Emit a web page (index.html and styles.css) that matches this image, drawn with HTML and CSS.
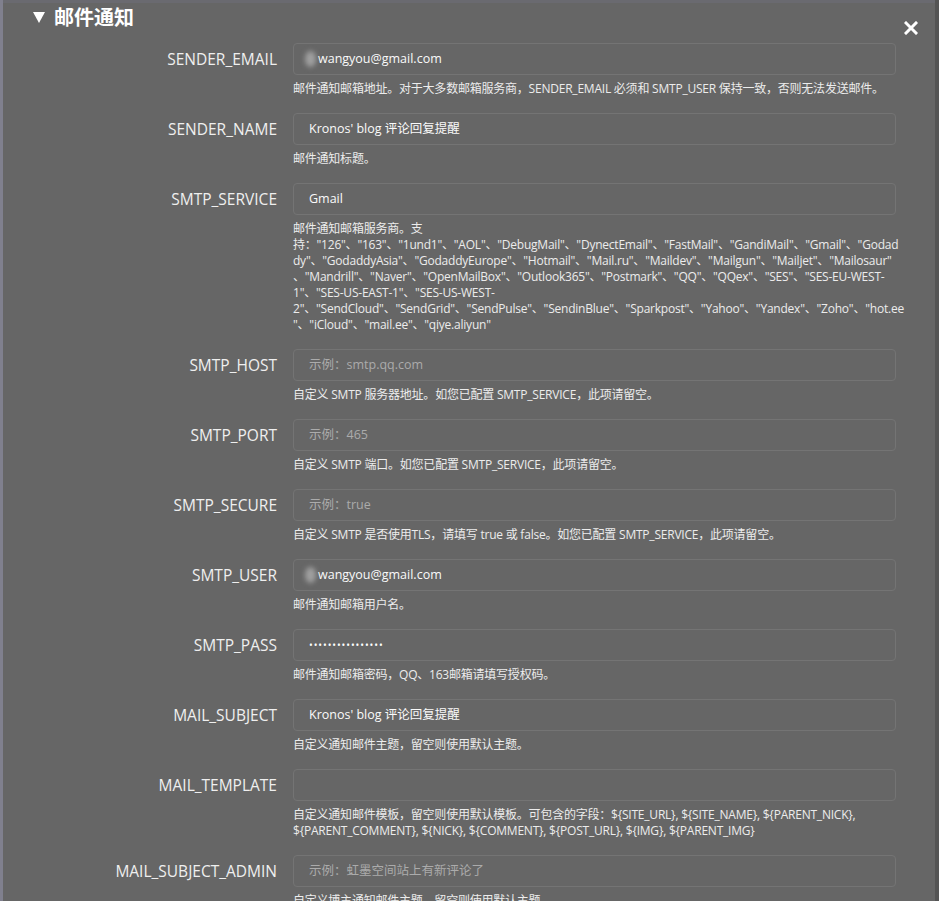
FILE: index.html
```html
<!DOCTYPE html>
<html lang="zh-CN">
<head>
<meta charset="utf-8">
<title>邮件通知</title>
<link rel="stylesheet" href="styles.css">
</head>
<body>
<div class="modal">
  <div class="head">
    <span class="tri"></span>
    <h2 class="title">邮件通知</h2>
    <button class="close" aria-label="关闭">
      <svg width="14" height="14" viewBox="0 0 14 14"><path d="M2 2 L12 12 M12 2 L2 12" stroke="#fff" stroke-width="3" stroke-linecap="square"/></svg>
    </button>
  </div>
  <div class="form">
    <div class="row">
      <label class="label">SENDER_EMAIL</label>
      <div class="field">
        <div class="input"><span class="blur"></span>wangyou@gmail.com</div>
        <p class="desc">邮件通知邮箱地址。对于大多数邮箱服务商，SENDER_EMAIL 必须和 SMTP_USER 保持一致，否则无法发送邮件。</p>
      </div>
    </div>
    <div class="row">
      <label class="label">SENDER_NAME</label>
      <div class="field">
        <div class="input">Kronos' blog 评论回复提醒</div>
        <p class="desc">邮件通知标题。</p>
      </div>
    </div>
    <div class="row">
      <label class="label">SMTP_SERVICE</label>
      <div class="field">
        <div class="input">Gmail</div>
        <p class="desc nowrap">邮件通知邮箱服务商。支<br>持："126"、"163"、"1und1"、"AOL"、"DebugMail"、"DynectEmail"、"FastMail"、"GandiMail"、"Gmail"、"Godad<br>dy"、"GodaddyAsia"、"GodaddyEurope"、"Hotmail"、"Mail.ru"、"Maildev"、"Mailgun"、"Mailjet"、"Mailosaur"<br>、"Mandrill"、"Naver"、"OpenMailBox"、"Outlook365"、"Postmark"、"QQ"、"QQex"、"SES"、"SES-EU-WEST-<br>1"、"SES-US-EAST-1"、"SES-US-WEST-<br>2"、"SendCloud"、"SendGrid"、"SendPulse"、"SendinBlue"、"Sparkpost"、"Yahoo"、"Yandex"、"Zoho"、"hot.ee<br>"、"iCloud"、"mail.ee"、"qiye.aliyun"</p>
      </div>
    </div>
    <div class="row">
      <label class="label">SMTP_HOST</label>
      <div class="field">
        <div class="input placeholder">示例：smtp.qq.com</div>
        <p class="desc">自定义 SMTP 服务器地址。如您已配置 SMTP_SERVICE，此项请留空。</p>
      </div>
    </div>
    <div class="row">
      <label class="label">SMTP_PORT</label>
      <div class="field">
        <div class="input placeholder">示例：465</div>
        <p class="desc">自定义 SMTP 端口。如您已配置 SMTP_SERVICE，此项请留空。</p>
      </div>
    </div>
    <div class="row">
      <label class="label">SMTP_SECURE</label>
      <div class="field">
        <div class="input placeholder">示例：true</div>
        <p class="desc">自定义 SMTP 是否使用TLS，请填写 true 或 false。如您已配置 SMTP_SERVICE，此项请留空。</p>
      </div>
    </div>
    <div class="row">
      <label class="label">SMTP_USER</label>
      <div class="field">
        <div class="input"><span class="blur"></span>wangyou@gmail.com</div>
        <p class="desc">邮件通知邮箱用户名。</p>
      </div>
    </div>
    <div class="row">
      <label class="label">SMTP_PASS</label>
      <div class="field">
        <div class="input"><span class="dots">••••••••••••••••</span></div>
        <p class="desc">邮件通知邮箱密码，QQ、163邮箱请填写授权码。</p>
      </div>
    </div>
    <div class="row">
      <label class="label">MAIL_SUBJECT</label>
      <div class="field">
        <div class="input">Kronos' blog 评论回复提醒</div>
        <p class="desc">自定义通知邮件主题，留空则使用默认主题。</p>
      </div>
    </div>
    <div class="row">
      <label class="label">MAIL_TEMPLATE</label>
      <div class="field">
        <div class="input"></div>
        <p class="desc">自定义通知邮件模板，留空则使用默认模板。可包含的字段：${SITE_URL}, ${SITE_NAME}, ${PARENT_NICK},<br>${PARENT_COMMENT}, ${NICK}, ${COMMENT}, ${POST_URL}, ${IMG}, ${PARENT_IMG}</p>
      </div>
    </div>
    <div class="row">
      <label class="label">MAIL_SUBJECT_ADMIN</label>
      <div class="field">
        <div class="input placeholder">示例：虹墨空间站上有新评论了</div>
        <p class="desc">自定义博主通知邮件主题，留空则使用默认主题。</p>
      </div>
    </div>
  </div>
</div>
</body>
</html>
```

FILE: styles.css
```css
html, body {
  margin: 0;
  padding: 0;
  height: 100%;
  overflow: hidden;
}
body {
  background: linear-gradient(to right, #80808e 0, #80808e 3px, #6a6a70 3px, #6a6a70 935px, #545454 935px);
  font-family: "Noto Sans CJK SC", sans-serif;
  color: #f0f0f0;
}
.modal {
  margin: 3px 4px 0 3px;
  width: 932px;
  height: 898px;
  background: #666666;
  box-sizing: border-box;
  padding: 0 39px 0 0;
  overflow: hidden;
}
.head {
  display: flex;
  align-items: center;
  height: 28px;
  padding-left: 30px;
  position: relative;
}
.tri {
  width: 0;
  height: 0;
  border-left: 6.5px solid transparent;
  border-right: 6.5px solid transparent;
  border-top: 11px solid #fff;
  margin-right: 9px;
  margin-top: 1px;
}
.title {
  margin: 0;
  font-size: 20px;
  font-weight: 700;
  color: #fff;
  line-height: 26px;
}
.close {
  position: absolute;
  right: -22px;
  top: 18px;
  background: none;
  border: 0;
  padding: 0;
  width: 14px;
  height: 14px;
  display: block;
}
.close svg { display: block; }
.form {
  padding-top: 12px;
}
.row {
  display: grid;
  grid-template-columns: 274px 603px;
  column-gap: 16px;
  margin-bottom: 16px;
}
.label {
  text-align: right;
  font-family: "Open Sans", "Noto Sans CJK SC", sans-serif;
  font-size: 15.5px;
  color: #efefef;
  line-height: 32px;
  height: 32px;
}
.field { min-width: 0; }
.input {
  box-sizing: border-box;
  height: 32px;
  border: 1px solid #747474;
  border-radius: 4px;
  padding: 0 15px;
  font-family: "Open Sans", "Noto Sans CJK SC", sans-serif;
  font-size: 12.5px;
  line-height: 30px;
  color: #fafafa;
  display: flex;
  align-items: center;
  white-space: nowrap;
}
.input.placeholder { color: #ababab; }
.blur {
  display: inline-block;
  width: 11px;
  height: 16px;
  border-radius: 50%;
  background: #a0a0a0;
  filter: blur(2.5px);
  margin-left: -4px;
  margin-right: 2px;
}
.dots {
  font-size: 10px;
  letter-spacing: 0.9px;
  color: #fff;
}
.desc {
  margin: 6px 0 0;
  font-size: 12px;
  line-height: 16px;
  color: #ececec;
  font-family: "Open Sans", "Noto Sans CJK SC", sans-serif;
  letter-spacing: -0.22px;
}
.nowrap { white-space: nowrap; }
```
